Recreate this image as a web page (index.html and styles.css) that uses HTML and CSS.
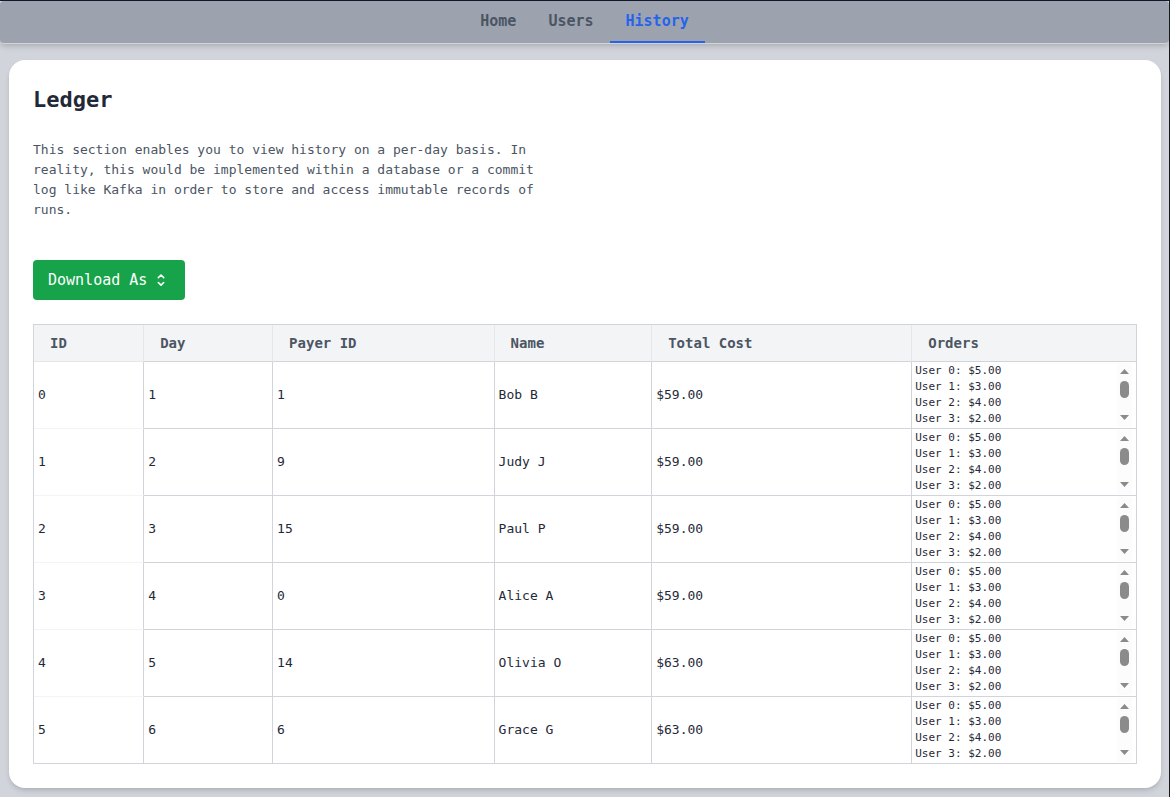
FILE: index.html
```html
<!DOCTYPE html>
<html lang="en">
<head>
<meta charset="utf-8">
<title>Ledger</title>
<link rel="stylesheet" href="styles.css">
</head>
<body>
<svg class="defs" aria-hidden="true">
  <symbol id="scrollbar" viewBox="0 0 15 64">
    <rect width="15" height="64" fill="#fcfcfc"/>
    <path d="M7.5 6 12 11H3z M3 52h9l-4.5 5z" fill="#8b8b8b"/>
    <rect x="3" y="18" width="9" height="17" rx="4.5" fill="#8b8b8b"/>
  </symbol>
</svg>
<nav class="tabs">
  <a class="tab" href="#home">Home</a>
  <a class="tab" href="#users">Users</a>
  <a class="tab tab-active" href="#history" aria-current="page">History</a>
</nav>
<main class="page">
  <section class="card">
    <h1 class="title">Ledger</h1>
    <p class="intro">This section enables you to view history on a per-day basis. In reality, this would be implemented within a database or a commit log like Kafka in order to store and access immutable records of runs.</p>
    <button class="download" type="button">Download As
      <svg class="download-icon" viewBox="0 0 20 20" fill="none" stroke="currentColor" stroke-width="1.6" stroke-linecap="round" stroke-linejoin="round" aria-hidden="true"><path d="M7.3 7.6 10 5l2.700 2.600M7.300 12.500l2.700 2.600 2.700-2.600"/></svg>
    </button>
    <table class="ledger">
      <colgroup><col class="col-id"><col class="col-day"><col class="col-payer"><col class="col-name"><col class="col-cost"><col></colgroup>
      <thead>
        <tr><th>ID</th><th>Day</th><th>Payer ID</th><th>Name</th><th>Total Cost</th><th>Orders</th></tr>
      </thead>
      <tbody>
        <tr><td>0</td><td>1</td><td>1</td><td>Bob B</td><td>$59.00</td><td class="orders-cell"><div class="orders"><ul class="order-list"><li>User 0: $5.00</li><li>User 1: $3.00</li><li>User 2: $4.00</li><li>User 3: $2.00</li></ul><svg class="scrollbar" aria-hidden="true"><use href="#scrollbar"/></svg></div></td></tr>
        <tr><td>1</td><td>2</td><td>9</td><td>Judy J</td><td>$59.00</td><td class="orders-cell"><div class="orders"><ul class="order-list"><li>User 0: $5.00</li><li>User 1: $3.00</li><li>User 2: $4.00</li><li>User 3: $2.00</li></ul><svg class="scrollbar" aria-hidden="true"><use href="#scrollbar"/></svg></div></td></tr>
        <tr><td>2</td><td>3</td><td>15</td><td>Paul P</td><td>$59.00</td><td class="orders-cell"><div class="orders"><ul class="order-list"><li>User 0: $5.00</li><li>User 1: $3.00</li><li>User 2: $4.00</li><li>User 3: $2.00</li></ul><svg class="scrollbar" aria-hidden="true"><use href="#scrollbar"/></svg></div></td></tr>
        <tr><td>3</td><td>4</td><td>0</td><td>Alice A</td><td>$59.00</td><td class="orders-cell"><div class="orders"><ul class="order-list"><li>User 0: $5.00</li><li>User 1: $3.00</li><li>User 2: $4.00</li><li>User 3: $2.00</li></ul><svg class="scrollbar" aria-hidden="true"><use href="#scrollbar"/></svg></div></td></tr>
        <tr><td>4</td><td>5</td><td>14</td><td>Olivia O</td><td>$63.00</td><td class="orders-cell"><div class="orders"><ul class="order-list"><li>User 0: $5.00</li><li>User 1: $3.00</li><li>User 2: $4.00</li><li>User 3: $2.00</li></ul><svg class="scrollbar" aria-hidden="true"><use href="#scrollbar"/></svg></div></td></tr>
        <tr><td>5</td><td>6</td><td>6</td><td>Grace G</td><td>$63.00</td><td class="orders-cell"><div class="orders"><ul class="order-list"><li>User 0: $5.00</li><li>User 1: $3.00</li><li>User 2: $4.00</li><li>User 3: $2.00</li></ul><svg class="scrollbar" aria-hidden="true"><use href="#scrollbar"/></svg></div></td></tr>
      </tbody>
    </table>
  </section>
</main>
</body>
</html>
```

FILE: styles.css
```css
* {
  box-sizing: border-box;
}

body {
  margin: 0;
  min-height: 100vh;
  border-top: 1px solid #14172b;
  border-right: 1px solid #18191f;
  background: #d1d5db;
  color: #1f2937;
  font-family: Consolas, "DejaVu Sans Mono", monospace;
  font-size: 13px;
  line-height: 20px;
}

.defs {
  display: none;
}

.tabs {
  display: flex;
  justify-content: center;
  border-bottom: 1px solid #d1d5db;
  border-radius: 4px;
  background: #9ca3af;
  box-shadow: 0 4px 6px -1px rgba(0, 0, 0, 0.1), 0 2px 4px -1px rgba(0, 0, 0, 0.1);
}

.tab {
  padding: 8px 16px;
  border-bottom: 2px solid transparent;
  color: #4b5563;
  font-size: 15px;
  font-weight: 700;
  line-height: 24px;
  text-decoration: none;
}

.tab-active {
  border-bottom-color: #2563eb;
  color: #2563eb;
}

.page {
  padding: 16px 8px 9px 9px;
}

.card {
  padding: 24px;
  border-radius: 16px;
  background: #fff;
  box-shadow: 0 4px 6px -1px rgba(0, 0, 0, 0.1), 0 2px 4px -1px rgba(0, 0, 0, 0.1);
}

.title {
  margin: 0;
  font-size: 22px;
  font-weight: 700;
  line-height: 32px;
}

.intro {
  max-width: 512px;
  margin: 24px 0 40px;
  color: #4b5563;
}

.download {
  display: flex;
  align-items: center;
  gap: 4px;
  height: 40px;
  margin-bottom: 24px;
  padding: 0 14px 0 15px;
  border: 0;
  border-radius: 4px;
  background: #16a34a;
  color: #fff;
  font-family: inherit;
  font-size: 15px;
}

.download-icon {
  width: 20px;
  height: 20px;
}

.ledger {
  width: 100%;
  table-layout: fixed;
  border: 1px solid #d1d5db;
  border-spacing: 0;
}

.col-id { width: 10%; }
.col-day { width: 11.7%; }
.col-payer { width: 20.1%; }
.col-name { width: 14.3%; }
.col-cost { width: 23.6%; }

.ledger th {
  padding: 8px 16px;
  border-right: 1px solid #e5e7eb;
  border-bottom: 1px solid #d1d5db;
  background: #f3f4f6;
  color: #4b5563;
  font-size: 14px;
  font-weight: 700;
  text-align: left;
}

.ledger td {
  padding: 1px 4px;
  border-right: 1px solid #d1d5db;
  border-bottom: 1px solid #d1d5db;
}

.ledger td:first-child {
  border-bottom-color: #f3f4f6;
}

.ledger th:first-child {
  border-bottom-color: #e5e7eb;
}

.ledger tr > :last-child {
  border-right: 0;
}

.ledger tbody tr:last-child td {
  border-bottom: 0;
}

.ledger .orders-cell {
  padding-left: 3px;
}

.orders {
  display: flex;
  justify-content: space-between;
}

.order-list {
  margin: 0;
  padding: 0;
  list-style: none;
  font-size: 11px;
  line-height: 16px;
}

.scrollbar {
  width: 15px;
  height: 64px;
}
```
